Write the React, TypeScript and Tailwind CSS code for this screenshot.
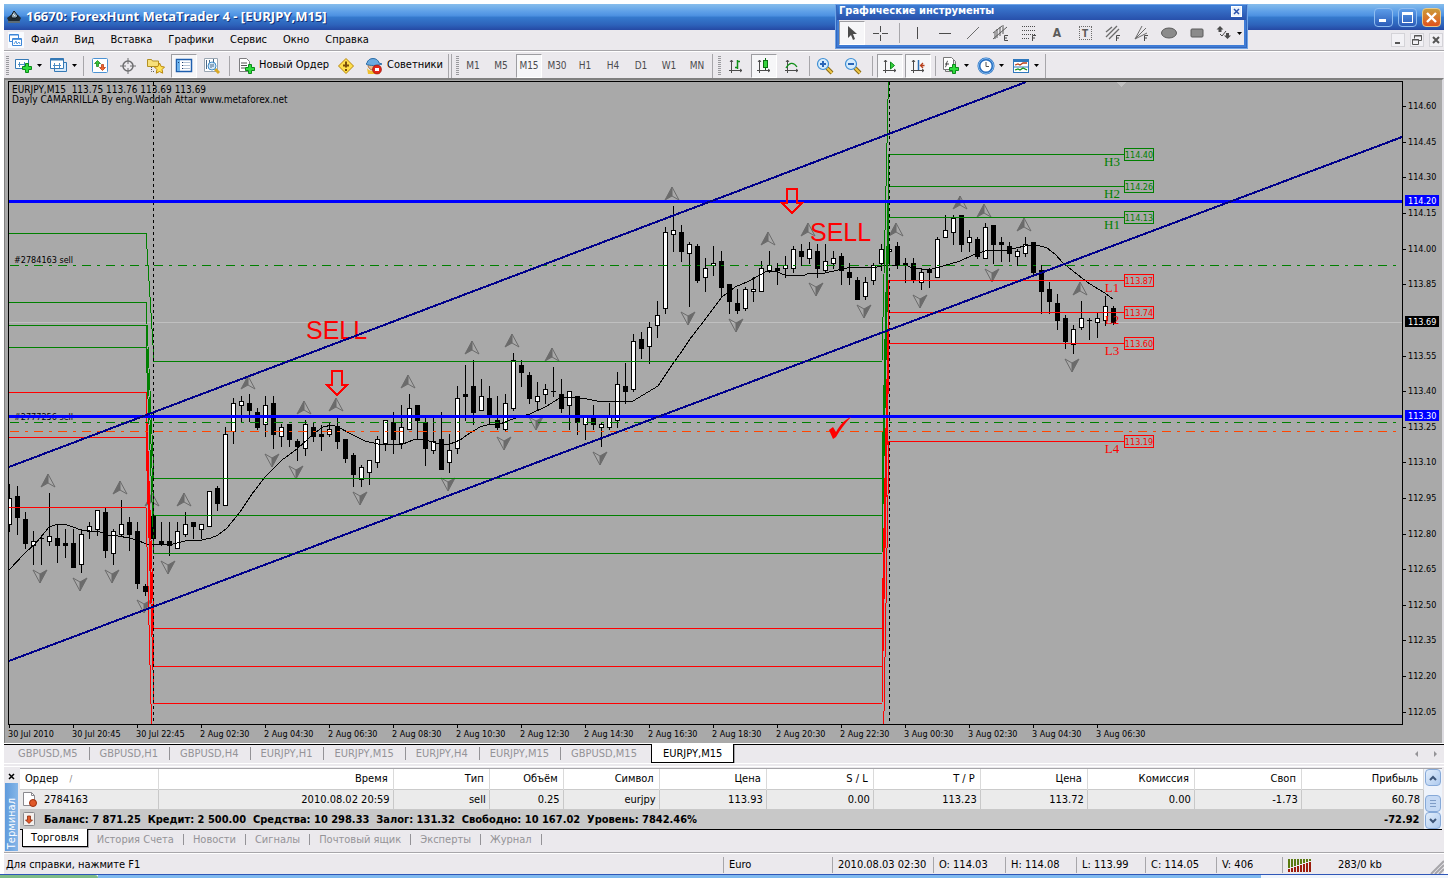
import type { ReactNode } from "react";
import clsx from "clsx";

type Candle = [high: number, low: number, top: number, bottom: number, up: 0 | 1];

const FIRST_X = 9;
const STEP = 8;

const CANDLES: Candle[] = [
  [484, 532, 498, 525, 1], [486, 535, 496, 518, 0], [512, 549, 519, 544, 0], [531, 565, 541, 546, 1],
  [535, 565, 538, 539, 0], [493, 546, 536, 542, 1], [524, 563, 538, 546, 0], [529, 558, 543, 546, 0],
  [529, 568, 543, 568, 0], [529, 573, 534, 565, 1], [522, 539, 526, 532, 1], [510, 536, 510, 530, 1],
  [508, 558, 512, 551, 0], [529, 565, 531, 554, 1], [500, 537, 524, 535, 1], [517, 551, 522, 535, 0],
  [522, 589, 531, 584, 0], [584, 596, 586, 592, 0], [514, 541, 516, 539, 0], [522, 546, 541, 545, 0],
  [522, 556, 541, 546, 0], [522, 549, 531, 549, 1], [512, 537, 524, 535, 1], [522, 539, 522, 527, 0],
  [524, 539, 524, 530, 1], [491, 527, 491, 527, 1], [486, 511, 488, 504, 0], [427, 506, 434, 506, 1],
  [398, 444, 403, 432, 1], [396, 423, 401, 406, 1], [394, 422, 403, 411, 0], [408, 430, 412, 428, 0],
  [396, 437, 405, 425, 1], [396, 449, 403, 435, 0], [424, 447, 427, 437, 1], [424, 447, 424, 440, 0],
  [439, 461, 441, 447, 0], [420, 456, 424, 449, 1], [422, 442, 427, 437, 0], [425, 451, 434, 437, 0],
  [422, 437, 429, 435, 1], [417, 449, 426, 442, 0], [439, 463, 439, 459, 0], [453, 487, 455, 475, 0],
  [465, 487, 467, 480, 1], [460, 485, 460, 473, 1], [436, 468, 439, 463, 1], [420, 451, 420, 444, 1],
  [412, 454, 422, 440, 0], [405, 449, 427, 444, 1], [394, 430, 408, 430, 1], [405, 439, 405, 421, 0],
  [418, 466, 422, 449, 0], [418, 454, 441, 451, 1], [412, 470, 439, 470, 0], [434, 473, 450, 463, 1],
  [386, 454, 398, 449, 1], [365, 421, 394, 397, 0], [360, 425, 386, 413, 0], [379, 411, 396, 411, 1],
  [386, 425, 398, 416, 0], [396, 430, 420, 428, 0], [394, 432, 403, 430, 1], [353, 411, 360, 409, 1],
  [360, 387, 365, 373, 0], [372, 404, 375, 399, 0], [382, 411, 396, 402, 1], [384, 404, 389, 395, 1],
  [367, 397, 391, 392, 0], [379, 413, 394, 409, 0], [391, 430, 391, 406, 1], [396, 435, 396, 423, 0],
  [415, 440, 417, 425, 1], [405, 430, 417, 425, 0], [422, 447, 424, 428, 1], [403, 430, 417, 428, 1],
  [372, 428, 384, 421, 1], [363, 404, 386, 392, 0], [334, 392, 341, 390, 1], [332, 359, 339, 349, 0],
  [322, 364, 327, 347, 1], [301, 338, 315, 326, 1], [227, 314, 232, 309, 1], [206, 252, 230, 235, 1],
  [225, 262, 232, 252, 0], [242, 307, 244, 254, 1], [244, 283, 246, 281, 0], [258, 292, 268, 278, 1],
  [246, 276, 263, 266, 1], [251, 297, 261, 288, 0], [284, 314, 284, 302, 0], [289, 314, 303, 311, 0],
  [287, 311, 289, 309, 1], [277, 302, 289, 292, 1], [261, 292, 268, 292, 1], [251, 273, 265, 271, 1],
  [263, 285, 268, 271, 0], [256, 278, 265, 269, 1], [246, 273, 249, 269, 1], [244, 266, 251, 257, 0],
  [242, 264, 249, 259, 1], [244, 278, 251, 269, 0], [244, 273, 261, 271, 1], [251, 269, 258, 264, 1],
  [253, 285, 256, 271, 0], [263, 285, 272, 278, 0], [277, 300, 280, 300, 0], [277, 300, 282, 297, 1],
  [263, 285, 265, 281, 1], [244, 271, 249, 264, 1], [246, 262, 249, 252, 1], [242, 269, 246, 266, 0],
  [258, 283, 263, 266, 0], [258, 283, 263, 281, 0], [269, 290, 272, 283, 1], [268, 288, 270, 273, 0],
  [237, 278, 239, 278, 1], [215, 238, 230, 238, 1], [215, 245, 218, 233, 1], [215, 252, 215, 245, 0],
  [230, 252, 237, 243, 1], [237, 259, 239, 257, 0], [223, 259, 227, 259, 1], [225, 264, 225, 245, 0],
  [237, 262, 242, 245, 0], [242, 262, 246, 254, 0], [249, 266, 251, 257, 1], [237, 257, 244, 254, 1],
  [242, 275, 242, 273, 0], [265, 314, 270, 292, 0], [282, 314, 289, 302, 0], [294, 330, 303, 321, 0],
  [315, 349, 318, 342, 0], [325, 354, 329, 345, 1], [301, 330, 318, 328, 1], [318, 340, 320, 321, 0],
  [313, 338, 318, 323, 1], [296, 326, 306, 321, 1], [306, 325, 308, 323, 0],
];

const AVERAGE =
  "9,570 25,553 35,544 41,537 49,527 58,524 67,525 73,527 81,530 90,531 100,532 108,535 118,536 129,538 137,540 146,544 173,544 185,541 202,540 211,538 218,535 227,528 240,512 252,494 265,477 282,460 297,449 308,439 315,433 323,427 332,425 338,427 353,435 365,441 378,444 403,444 413,440 420,439 433,442 443,445 450,444 460,440 467,435 480,427 490,424 500,424 513,419 530,414 547,406 558,399 567,397 587,399 602,402 617,401 625,402 633,401 643,395 658,386 672,365 682,351 690,339 707,317 722,297 735,287 747,282 760,275 767,271 777,272 785,275 802,276 810,273 825,273 847,268 877,267 887,265 905,265 913,268 922,269 932,269 950,264 960,261 973,255 985,251 1007,250 1025,246 1037,245 1047,248 1055,254 1063,263 1073,271 1087,282 1098,289 1105,293 1113,299";

const FRACTALS_UP = [
  [48, 474], [120, 481], [152, 493], [184, 493], [248, 376], [304, 401], [336, 398], [408, 375], [472, 341], [512, 334],
  [552, 348], [672, 187], [768, 232], [808, 223], [896, 223], [960, 196], [984, 204], [1024, 218], [1080, 282],
];

const FRACTALS_DOWN = [
  [40, 583], [80, 591], [112, 583], [144, 613], [168, 574], [272, 467], [296, 479], [360, 505], [448, 491], [504, 450],
  [536, 430], [600, 465], [688, 325], [736, 332], [816, 296], [864, 318], [920, 308], [992, 282], [1072, 372],
];

// previous day, current day and next day level of each Camarilla line
const LEVELS = [
  { color: "#008000", y: [233, 361, 56] },
  { color: "#008000", y: [302, 478, 154], name: "H3", price: "114.40" },
  { color: "#008000", y: [325, 515, 186], name: "H2", price: "114.26" },
  { color: "#008000", y: [347, 553, 217], name: "H1", price: "114.13" },
  { color: "#ff0000", y: [392, 628, 280], name: "L1", price: "113.87" },
  { color: "#ff0000", y: [415, 666, 312], name: "L2", price: "113.74" },
  { color: "#ff0000", y: [437, 703, 343], name: "L3", price: "113.60" },
  { color: "#ff0000", y: [507, 820, 441], name: "L4", price: "113.19" },
];

const PRICES: [string, number][] = [
  ["114.60", 106], ["114.45", 142], ["114.30", 177], ["114.15", 213], ["114.00", 249], ["113.85", 284],
  ["113.55", 356], ["113.40", 391], ["113.25", 427], ["113.10", 462], ["112.95", 498], ["112.80", 534],
  ["112.65", 569], ["112.50", 605], ["112.35", 640], ["112.20", 676], ["112.05", 712],
];

const TIMES = [
  "30 Jul 2010", "30 Jul 20:45", "30 Jul 22:45", "2 Aug 02:30", "2 Aug 04:30", "2 Aug 06:30", "2 Aug 08:30",
  "2 Aug 10:30", "2 Aug 12:30", "2 Aug 14:30", "2 Aug 16:30", "2 Aug 18:30", "2 Aug 20:30", "2 Aug 22:30",
  "3 Aug 00:30", "3 Aug 02:30", "3 Aug 04:30", "3 Aug 06:30",
];

const MENU = ["Файл", "Вид", "Вставка", "Графики", "Сервис", "Окно", "Справка"];
const TIMEFRAMES = ["M1", "M5", "M15", "M30", "H1", "H4", "D1", "W1", "MN"];
const CHART_TABS = ["GBPUSD,M5", "GBPUSD,H1", "GBPUSD,H4", "EURJPY,H1", "EURJPY,M15", "EURJPY,H4", "EURJPY,M15", "GBPUSD,M15"];
const TERMINAL_TABS = ["История Счета", "Новости", "Сигналы", "Почтовый ящик", "Эксперты", "Журнал"];

const COLUMNS = [
  { title: "Время", value: "2010.08.02 20:59", width: "w-[235px]" },
  { title: "Тип", value: "sell", width: "w-[96px]" },
  { title: "Объём", value: "0.25", width: "w-[74px]" },
  { title: "Символ", value: "eurjpy", width: "w-[96px]" },
  { title: "Цена", value: "113.93", width: "w-[107px]" },
  { title: "S / L", value: "0.00", width: "w-[107px]" },
  { title: "T / P", value: "113.23", width: "w-[107px]" },
  { title: "Цена", value: "113.72", width: "w-[107px]" },
  { title: "Комиссия", value: "0.00", width: "w-[107px]" },
  { title: "Своп", value: "-1.73", width: "w-[107px]" },
  { title: "Прибыль", value: "60.78", width: "w-[122px]" },
];

function Icon({ children, size = 18 }: { children: ReactNode; size?: number }) {
  return (
    <svg width={size} height={size} viewBox={`0 0 ${size} ${size}`} className="shrink-0" aria-hidden="true">
      {children}
    </svg>
  );
}

function Caret() {
  return (
    <svg width="5" height="3" viewBox="0 0 5 3" className="shrink-0" aria-hidden="true">
      <path d="M0 0h5L2.5 3z" fill="#000" />
    </svg>
  );
}

function Plus({ x, y }: { x: number; y: number }) {
  return (
    <path
      transform={`translate(${x} ${y})`}
      d="M3.5.5h3v3h3v3h-3v3h-3v-3h-3v-3h3z"
      fill="#2fdc3c"
      stroke="#0b8a1a"
    />
  );
}

const Axes = () => (
  <path d="M4.5 3v13M2 13.5h13M3 5l1.5-2L6 5M13 12l2 1.5-2 1.5" fill="none" stroke="#4b4b4b" />
);

function Magnifier({ minus }: { minus?: boolean }) {
  return (
    <Icon>
      <path d="M11 11l5 5" stroke="#8a6a12" strokeWidth="4" />
      <path d="M11 11l5 5" stroke="#f0c94c" strokeWidth="2" />
      <circle cx="7" cy="7" r="5.5" fill="#d6ecfc" stroke="#3f8fd4" strokeWidth="1.2" />
      <path d={minus ? "M4 7h6" : "M4 7h6M7 4v6"} stroke="#2a66b8" strokeWidth="2" />
    </Icon>
  );
}

function ToolButton({
  label,
  pressed,
  caret,
  children,
}: {
  label: string;
  pressed?: boolean;
  caret?: boolean;
  children: ReactNode;
}) {
  return (
    <button
      aria-label={label}
      className={clsx(
        "flex h-6 shrink-0 items-center justify-center border",
        caret ? "w-8 gap-1" : "w-[26px]",
        pressed ? "border-[#9d9da1] border-r-white border-b-white bg-[#f6f6f8]" : "border-transparent",
      )}
    >
      {children}
      {caret && <Caret />}
    </button>
  );
}

const Grip = () => (
  <span className="h-5 w-[3px] shrink-0 bg-[repeating-linear-gradient(to_bottom,#9a9a9e_0_1px,transparent_1px_2px)]" />
);
const Separator = () => <span className="h-5 w-px shrink-0 bg-[#a7a6aa]" />;
const GroupEnd = () => <span className="h-6 w-px shrink-0 bg-[#a7a6aa]" />;

function TitleBar() {
  return (
    <header className="flex h-[26px] shrink-0 items-center bg-[linear-gradient(#86bdec_0%,#5d9fe8_30%,#4e92e2_44%,#3579cd_52%,#2d63bb_80%,#2549a4_100%)] pr-[3px] pl-[2px]">
      <Icon size={16}>
        <path d="M1 9l4-3h7l3 3-2 4H3z" fill="#1f2a33" />
        <path d="M5 7l3-5 4 5-2 2H6z" fill="#8fa3b0" stroke="#10181e" />
        <path d="M2 13h12" stroke="#5d6c76" strokeWidth="2" />
        <path d="M7 5l2 2" stroke="#e6eef3" />
      </Icon>
      <h1 className="ml-1 grow truncate font-['Open_Sans',sans-serif] text-[13px] font-bold text-white [text-shadow:1px_1px_0_#123078]">
        16670: ForexHunt MetaTrader 4 - [EURJPY,M15]
      </h1>
      <div className="flex gap-[5px]">
        <button aria-label="Свернуть" className="flex h-[19px] w-[19px] items-end rounded-sm border border-[#8fbdf0] bg-linear-to-b from-[#5c9ce8] to-[#2c5cb8] p-1">
          <span className="h-[3px] w-[7px] bg-white" />
        </button>
        <button aria-label="Развернуть" className="flex h-[19px] w-[19px] items-center justify-center rounded-sm border border-[#8fbdf0] bg-linear-to-b from-[#5c9ce8] to-[#2c5cb8]">
          <span className="h-[11px] w-[11px] border border-t-[3px] border-white" />
        </button>
        <button aria-label="Закрыть" className="flex h-[19px] w-[19px] items-center justify-center rounded-sm border border-[#e8c98a] bg-linear-to-b from-[#c99a3a] to-[#e0501c]">
          <Icon size={13}>
            <path d="M2 2l9 9M11 2l-9 9" stroke="#fff" strokeWidth="2.4" />
          </Icon>
        </button>
      </div>
    </header>
  );
}

function MenuBar() {
  return (
    <nav className="flex h-5 shrink-0 items-center pl-1 text-[11px]">
      <Icon size={16}>
        <rect width="16" height="16" fill="#f8fbff" />
        <path d="M1.5 2.5h9v7h-9z" fill="#fff" stroke="#3d86d8" />
        <path d="M2 3h8" stroke="#3d86d8" />
        <path d="M4.5 6.5h9v7h-9z" fill="#fff" stroke="#3d86d8" />
        <path d="M5 7.5h8M6 12l2-3 1 3 2-2 1 2" fill="none" stroke="#5a9de0" />
      </Icon>
      <div className="ml-[7px] flex grow gap-4">
        {MENU.map((item) => (
          <button key={item}>{item}</button>
        ))}
      </div>
      <div className="flex gap-[5px] pr-px">
        <button aria-label="Свернуть окно" className="border border-[#d4d3d8] bg-[#f2f1f5]">
          <Icon size={12}>
            <path d="M3 9h5" stroke="#555" strokeWidth="2" />
          </Icon>
        </button>
        <button aria-label="Восстановить окно" className="border border-[#d4d3d8] bg-[#f2f1f5]">
          <Icon size={12}>
            <path d="M3.5 4.5v-3h7v5h-3M3 2h8M1.5 5.5h6v5h-6zM1 6h7" fill="none" stroke="#555" />
          </Icon>
        </button>
        <button aria-label="Закрыть окно" className="border border-[#d4d3d8] bg-[#f2f1f5]">
          <Icon size={12}>
            <path d="M3 3l6 6M9 3l-6 6" stroke="#555" strokeWidth="2" />
          </Icon>
        </button>
      </div>
    </nav>
  );
}

function ToolBar() {
  return (
    <div className="flex h-[27px] shrink-0 items-center overflow-hidden border-t border-white pt-px pl-[2px] text-[11px]">
      <Grip />
      <div className="ml-[3px] flex items-center gap-[3px]">
        <ToolButton label="Новый график" caret>
          <Icon>
            <path d="M.5 2.5h13v9H.5z" fill="#fff" stroke="#3579b5" />
            <path d="M3 7.5h8M4.5 5v5M9.5 5v5" stroke="#4b8cc4" />
            <Plus x={7} y={6} />
          </Icon>
        </ToolButton>
        <ToolButton label="Профили" caret>
          <Icon>
            <path d="M4.5 5.5h12v9h-12z" fill="#d6e9fa" stroke="#3579b5" />
            <path d="M.5 1.5h13v10H.5z" fill="#fff" stroke="#3579b5" />
            <path d="M.5 2.5h13" stroke="#3579b5" strokeWidth="2" />
            <path d="M3 8.5h8M4.5 6v5M9.5 6v5" stroke="#4b8cc4" />
          </Icon>
        </ToolButton>
      </div>
      <div className="mr-[3px] ml-1 flex">
        <Separator />
      </div>
      <div className="flex gap-[2px]">
        <ToolButton label="Обзор рынка">
          <Icon>
            <rect x="1.5" y="1.5" width="15" height="14" rx="1" fill="#fff" stroke="#4b92d4" />
            <path d="M6.5 3.5l3 3h-2v3h-2v-3h-2z" fill="#36c436" stroke="#107a10" strokeWidth=".7" />
            <path d="M11.5 13.5l3-3h-2v-3h-2v3h-2z" fill="#f0662e" stroke="#b03008" strokeWidth=".7" />
          </Icon>
        </ToolButton>
        <ToolButton label="Окно данных">
          <Icon>
            <circle cx="9" cy="9" r="5" fill="none" stroke="#6e6e70" strokeWidth="1.5" />
            <path d="M9 1v6M9 11v6M1 9h6M11 9h6" stroke="#6e6e70" />
          </Icon>
        </ToolButton>
        <ToolButton label="Навигатор">
          <Icon>
            <path d="M.5 9.5v-7h4l1 1.500h6v5.5z" fill="#f7e07a" stroke="#b39022" />
            <path d="M4.5 10v4.5H8" fill="none" stroke="#555" strokeDasharray="1 1" />
            <path d="M12.5 6l1.700 3.500 3.300.5-2.400 2.500.6 3.700-3.200-1.700-3.200 1.700.6-3.700L7.500 10l3.300-.5z" fill="#ffe35a" stroke="#b8860b" />
          </Icon>
        </ToolButton>
        <ToolButton label="Терминал" pressed>
          <Icon>
            <rect x="1.5" y="2.5" width="15" height="12" fill="#fff" stroke="#1f5fae" strokeWidth="1.5" />
            <path d="M2 3h3v11H2z" fill="#6db3ec" />
            <path d="M7 5.5h8M7 8.5h8M7 11.5h8" stroke="#b4c4d6" />
            <path d="M3 5.5h1M7 5.5h1M7 8.5h1M7 11.5h1" stroke="#1f3f6e" />
          </Icon>
        </ToolButton>
        <ToolButton label="Тестер стратегий">
          <Icon>
            <path d="M1.5 1.5h13v13h-13z" fill="#fff" stroke="#9aa6b2" />
            <path d="M3.5 3v9M6.5 3v5M10.5 2v6" stroke="#4a6a8a" />
            <path d="M12 12l4 4" stroke="#d8a826" strokeWidth="3" />
            <circle cx="9" cy="9" r="4" fill="#cfe6f8" fillOpacity=".85" stroke="#3f8cc8" />
            <path d="M8 7v4M10 7v3" stroke="#4a6a8a" />
          </Icon>
        </ToolButton>
      </div>
      <div className="mx-1 flex">
        <Separator />
      </div>
      <button className="ml-[5px] flex items-center gap-1">
        <Icon size={16}>
          <path d="M.5.5h7l3 3v10H.5z" fill="#fff" stroke="#7d7d80" />
          <path d="M2 5h6M2 7.5h6M2 10h4" stroke="#555" />
          <Plus x={6} y={6} />
        </Icon>
        Новый Ордер
      </button>
      <div className="ml-1 flex">
        <ToolButton label="MetaEditor">
          <Icon>
            <path d="M9 1.5L16.5 9 9 16.5 1.5 9z" fill="#ffe04a" stroke="#b8860b" />
            <path d="M9 4.5v6M6 8.5h6" stroke="#7a4e08" strokeWidth="2" />
            <path d="M9 12v2" stroke="#7a4e08" strokeWidth="2" />
          </Icon>
        </ToolButton>
      </div>
      <button className="mr-[5px] ml-[6px] flex items-center gap-1">
        <Icon>
          <circle cx="8" cy="8" r="5" fill="#e8b98a" stroke="#a8744a" />
          <path d="M2 6c1-6 11-6 12 0l3 1c-4 2-13 2-16 0z" fill="#6aaae0" stroke="#2d6ea8" />
          <path d="M2 11c2 4 10 4 12 0l1 6H3z" fill="#f0c030" />
          <circle cx="12" cy="12.5" r="4.5" fill="#e0261a" stroke="#8e0d06" strokeWidth=".6" />
          <rect x="10" y="11" width="4" height="3" fill="#fff" />
        </Icon>
        Советники
      </button>
      <div className="flex gap-[2px]">
        <GroupEnd />
        <GroupEnd />
      </div>
      <div className="ml-1 flex">
        <Grip />
      </div>
      <div className="ml-px flex gap-[2px] text-[10px] text-[#4b4b4e]">
        {TIMEFRAMES.map((tf) => (
          <button
            key={tf}
            aria-pressed={tf === "M15"}
            className={clsx(
              "h-6 w-[26px] border",
              tf === "M15" ? "border-[#9d9da1] border-r-white border-b-white bg-[#f6f6f8]" : "border-transparent",
            )}
          >
            {tf}
          </button>
        ))}
      </div>
      <div className="ml-[2px] flex">
        <GroupEnd />
      </div>
      <div className="mr-[2px] ml-[5px] flex">
        <Grip />
      </div>
      <div className="flex gap-[2px]">
        <ToolButton label="Бары">
          <Icon>
            <Axes />
            <path d="M10.5 3v9M8 10.5h2.500M10.5 4.500H13" stroke="#109018" strokeWidth="1.5" />
          </Icon>
        </ToolButton>
        <ToolButton label="Японские свечи" pressed>
          <Icon>
            <Axes />
            <path d="M10.5 1v12" stroke="#0b6e12" />
            <rect x="8.5" y="3.5" width="4" height="7" fill="#35d23d" stroke="#0b6e12" />
          </Icon>
        </ToolButton>
        <ToolButton label="Линия">
          <Icon>
            <Axes />
            <path d="M3 11c3-5 7-7 11-1" fill="none" stroke="#109018" strokeWidth="1.3" />
          </Icon>
        </ToolButton>
      </div>
      <div className="mr-[2px] ml-1 flex">
        <Separator />
      </div>
      <div className="flex gap-[2px]">
        <ToolButton label="Увеличить">
          <Magnifier />
        </ToolButton>
        <ToolButton label="Уменьшить">
          <Magnifier minus />
        </ToolButton>
      </div>
      <div className="mr-1 ml-[6px] flex">
        <Separator />
      </div>
      <div className="flex gap-[2px]">
        <ToolButton label="Автопрокрутка" pressed>
          <Icon>
            <Axes />
            <path d="M9.5 5v7l4-3.500z" fill="#35d23d" stroke="#0b8a1a" />
          </Icon>
        </ToolButton>
        <ToolButton label="Сдвиг графика" pressed>
          <Icon>
            <Axes />
            <path d="M9.5 3v10" stroke="#2c6fb4" strokeWidth="1.5" />
            <path d="M15.5 8.5h-4M14 6l-2.500 2.500L14 11" fill="none" stroke="#b8401c" strokeWidth="1.3" />
          </Icon>
        </ToolButton>
      </div>
      <div className="mx-1 flex">
        <Separator />
      </div>
      <div className="flex gap-[3px]">
        <ToolButton label="Индикаторы" caret>
          <Icon>
            <path d="M3.5 2.5h8l2 2v10h-10z" fill="#e6e6e8" stroke="#777" />
            <path d="M1.5 .5h8l2 2v10h-10z" fill="#fff" stroke="#777" />
            <path d="M6 4c-2 0-1 6-3 6M3 7h4" fill="none" stroke="#444" />
            <Plus x={7} y={7} />
          </Icon>
        </ToolButton>
        <ToolButton label="Периоды" caret>
          <Icon>
            <circle cx="9" cy="9" r="7" fill="#fff" stroke="#2a6fc0" strokeWidth="3" />
            <circle cx="9" cy="9" r="7.5" fill="none" stroke="#7db8ee" />
            <path d="M9 5v4.500h3" fill="none" stroke="#555" />
          </Icon>
        </ToolButton>
        <ToolButton label="Шаблоны" caret>
          <Icon>
            <rect x="1.5" y="2.5" width="15" height="13" fill="#fff" stroke="#2f78bd" />
            <path d="M1.5 3.5h15" stroke="#2f78bd" strokeWidth="3" />
            <path d="M1.5 10h15" stroke="#2f78bd" />
            <path d="M3 8l3-1 2 1 3-2 4 0" fill="none" stroke="#b8401c" strokeWidth="1.3" />
            <path d="M3 13l3-1 2 1 3-2 4 2" fill="none" stroke="#109018" strokeWidth="1.3" />
          </Icon>
        </ToolButton>
      </div>
      <div className="ml-[3px] flex">
        <GroupEnd />
      </div>
    </div>
  );
}

function DrawingTools() {
  return (
    <section
      aria-label="Графические инструменты"
      className="absolute top-1 left-[835px] border-2 border-t-0 border-[#3567bd] bg-[#ebe9ed] outline-1 -outline-offset-1 outline-[#6ea3e6]"
    >
      <div className="flex h-4 items-center justify-between bg-linear-to-b from-[#3f80d6] to-[#2850ab] pr-1 pb-[2px] pl-[2px]">
        <h2 className="text-[11px] leading-[14px] font-bold text-white">Графические инструменты</h2>
        <button aria-label="Закрыть панель" className="flex h-[11px] w-[11px] items-center justify-center border border-white bg-[#e9f1fb]">
          <Icon size={7}>
            <path d="M1 1l5 5M6 1L1 6" stroke="#2850ab" strokeWidth="1.5" />
          </Icon>
        </button>
      </div>
      <div className="flex items-center gap-[2px] border-2 border-t-0 border-[#3e7cd6] pt-px">
        <ToolButton label="Курсор" pressed>
          <Icon>
            <path d="M5 2v12l3-3 2 5 2-1-2-5h4z" fill="#4b4b4b" />
          </Icon>
        </ToolButton>
        <ToolButton label="Перекрестие">
          <Icon>
            <path d="M9.5 2v6M9.5 11v6M2 9.5h6M11 9.5h6" stroke="#4b4b4b" />
          </Icon>
        </ToolButton>
        <div className="mr-[2px] ml-[4px] flex">
          <Separator />
        </div>
        <ToolButton label="Вертикальная линия">
          <Icon>
            <path d="M9.5 3v12" stroke="#4b4b4b" />
          </Icon>
        </ToolButton>
        <ToolButton label="Горизонтальная линия">
          <Icon>
            <path d="M3 9.5h12" stroke="#4b4b4b" />
          </Icon>
        </ToolButton>
        <ToolButton label="Трендовая линия">
          <Icon>
            <path d="M3 15L15 3" stroke="#6b6b6b" />
          </Icon>
        </ToolButton>
        <ToolButton label="Равноудаленный канал">
          <Icon>
            <path d="M1 9l9-7M1 15L15 3M5 5v9M8 3v9M11 1v9M3 8v7" stroke="#5b5b5b" />
            <path d="M16 11.5h-3.500v5H16M12.5 14H15" fill="none" stroke="#4b4b4b" />
          </Icon>
        </ToolButton>
        <ToolButton label="Линии Фибоначчи">
          <Icon>
            <path d="M2 2.5h14M2 6.5h14M2 10.5h14M2 14.5h8" stroke="#4b4b4b" strokeDasharray="1 1" />
            <path d="M16 11.5h-3.500V17M12.5 14H15" fill="none" stroke="#4b4b4b" />
          </Icon>
        </ToolButton>
        <ToolButton label="Текст">
          <span aria-hidden="true" className="text-[12px] font-bold text-[#5b5b5b]">A</span>
        </ToolButton>
        <ToolButton label="Текстовая метка">
          <span aria-hidden="true" className="flex h-[14px] w-[13px] items-center justify-center border border-dotted border-[#6b6b6b] text-[10px] font-bold text-[#5b5b5b]">
            T
          </span>
        </ToolButton>
        <ToolButton label="Канал Фибоначчи">
          <Icon>
            <path d="M2 8l6-5M2 13L13 2M5 15L15 5" stroke="#6b6b6b" strokeWidth="1.3" />
            <path d="M16 11.5h-3.500V17M12.5 14H15" fill="none" stroke="#4b4b4b" />
          </Icon>
        </ToolButton>
        <ToolButton label="Веер Фибоначчи">
          <Icon>
            <path d="M3 15L10 2M3 15L14 4M3 15l12-6" stroke="#6b6b6b" />
            <path d="M16 11.5h-3.500V17M12.5 14H15" fill="none" stroke="#4b4b4b" />
          </Icon>
        </ToolButton>
        <ToolButton label="Эллипс">
          <Icon>
            <ellipse cx="9" cy="9" rx="7.5" ry="5" fill="#8b8b8b" stroke="#5b5b5b" />
          </Icon>
        </ToolButton>
        <ToolButton label="Прямоугольник">
          <Icon>
            <rect x="3" y="5" width="12" height="8" rx="1" fill="#8b8b8b" stroke="#5b5b5b" />
          </Icon>
        </ToolButton>
        <ToolButton label="Стрелки" caret>
          <Icon>
            <path d="M5 2l3.500 3.500h-2V8h-3V5.500h-2z" fill="#4b4b4b" />
            <path d="M12.5 15L16 11.500h-2V9h-3v2.500H9z" fill="#4b4b4b" />
            <path d="M5 10l2 2 4-5" fill="none" stroke="#4b4b4b" />
          </Icon>
        </ToolButton>
      </div>
    </section>
  );
}

function Levels() {
  return (
    <>
      {LEVELS.map(({ color, y: [before, today, next], name, price }) => (
        <g key={before} fill={color} stroke="none">
          <rect x="9" y={before} width="137" height="1" />
          <path d={`M146 ${before}L154 ${today}`} stroke={color} />
          <rect x="153" y={today} width="729" height="1" />
          <path d={`M882 ${today}L889 ${next}`} stroke={color} />
          <rect x="889" y={next} width="235" height="1" />
          {name && (
            <>
              <rect x="1124" y={next - 6} width="30" height="13" />
              <rect x="1125" y={next - 5} width="28" height="11" fill="#a9a9a9" />
              <text x="1139" y={next + 4} textAnchor="middle" fontSize="9">
                {price}
              </text>
            </>
          )}
        </g>
      ))}
    </>
  );
}

function SellArrow({ x, y, height }: { x: number; y: number; height: number }) {
  return (
    <path
      transform={`translate(${x} ${y})`}
      d={`M-5 0H5V${height}H10L0 ${height + 10}L-10 ${height}H-5Z`}
      fill="none"
      stroke="#ff0000"
      strokeWidth="2"
    />
  );
}

function Plot() {
  return (
    <svg className="block h-full w-full" role="img" aria-label="EURJPY, M15">
      <g transform="translate(-9 -82)" shapeRendering="crispEdges">
        <rect x="9" y="322" width="4000" height="1" fill="#c0c0c0" />
        <path d="M1117 82h9l-4 5h-1z" fill="#c0c0c0" />
        <g fill="#6b6b6b" stroke="#6b6b6b" strokeWidth="1" shapeRendering="auto">
          {FRACTALS_UP.map(([x, y]) => (
            <g key={x} transform={`translate(${x} ${y})`}>
              <path d="M0 0L-7 13L0 9z" />
              <path d="M0 0L7 13L0 9" fill="none" />
            </g>
          ))}
          {FRACTALS_DOWN.map(([x, y]) => (
            <g key={x} transform={`translate(${x} ${y}) rotate(180)`}>
              <path d="M0 0L-7 13L0 9z" />
              <path d="M0 0L7 13L0 9" fill="none" />
            </g>
          ))}
        </g>

        {CANDLES.map(([high, low, top, bottom, up], i) => {
          const x = FIRST_X + i * STEP;
          return (
            <g key={x}>
              <rect x={x} y={high} width="1" height={low - high} />
              <rect x={x - 2} y={top} width="5" height={bottom - top} />
              {up === 1 && <rect x={x - 1} y={top + 1} width="3" height={bottom - top - 2} fill="#fff" />}
            </g>
          );
        })}

        <polyline points={AVERAGE} fill="none" stroke="#000" />
        <Levels />
        <path d="M153 82V4000M889 82V4000" stroke="#000" strokeDasharray="3 3" />

        <g fill="none" strokeDasharray="9 6 3 6">
          <path d="M10 265H4000" stroke="#008000" />
          <path d="M10 422H4000" stroke="#008000" />
          <path d="M10 431H4000" stroke="#ff4500" />
        </g>

        <g fontSize="10">
          <text x="12" y="93" className="whitespace-pre">EURJPY,M15  113.75 113.76 113.69 113.69</text>
          <text x="12" y="103">Dayly CAMARRILLA By eng.Waddah Attar www.metaforex.net</text>
        </g>
        <g fontSize="9">
          <text x="14" y="263">#2784163 sell</text>
          <text x="14" y="420">#2777256 sell</text>
        </g>

        <rect x="9" y="200" width="4000" height="3" fill="#0000ff" />
        <rect x="9" y="415" width="4000" height="3" fill="#0000ff" />

        <g fill="#ff0000" fontSize="25" fontFamily="Liberation Sans, sans-serif">
          <text x="306" y="339">SELL</text>
          <text x="810" y="241">SELL</text>
        </g>
        <SellArrow x={337} y={371} height={14} />
        <SellArrow x={792} y={189} height={14} />
        <path d="M829 430l4-3 3 5c4-7 8-12 15-15-6 6-11 13-15 20l-3 2z" fill="#ff0000" shapeRendering="auto" />

        <g stroke="#00008b" strokeWidth="2">
          <path d="M9 467L1026 82" />
          <path d="M9 661L1402 137L2402 -239" fill="none" />
        </g>

        <g fontSize="13" fontFamily="Liberation Serif, serif" textAnchor="middle">
          {LEVELS.filter((level) => level.name).map(({ color, y, name }) => (
            <text key={name} x="1112" y={y[2] + 12} fill={color}>
              {name}
            </text>
          ))}
        </g>
      </g>
    </svg>
  );
}

function PriceTag({ y, price, color }: { y: number; price: string; color: string }) {
  return (
    <>
      <rect x="1405" y={y} width="34" height="11" fill={color} />
      <text x="1408" y={y + 9} fill="#fff">
        {price}
      </text>
    </>
  );
}

function Chart() {
  return (
    <main className="grid min-h-0 grow grid-cols-[minmax(0,1fr)_39px] grid-rows-[minmax(0,1fr)_18px] border-t-2 border-r-2 border-l border-t-[#808080] border-r-[#dcdbe0] border-l-[#808080] bg-[#a9a9a9] pt-px pl-[3px]">
      <div className="min-h-0 overflow-hidden border border-black">
        <Plot />
      </div>
      <svg className="block h-full w-full" role="img" aria-label="Цена" fontSize="9">
        <g transform="translate(-1403 -81)">
          {PRICES.map(([price, y]) => (
            <g key={price}>
              <rect x="1403" y={y} width="3" height="1" />
              <text x="1408" y={y + 3}>
                {price}
              </text>
            </g>
          ))}
          <PriceTag y={195} price="114.20" color="#0000ff" />
          <PriceTag y={316} price="113.69" color="#000" />
          <PriceTag y={410} price="113.30" color="#0000ff" />
        </g>
      </svg>
      <svg className="col-span-2 block h-full w-full" role="img" aria-label="Время" fontSize="9">
        {TIMES.map((time, i) => (
          <g key={time}>
            <rect x={1 + i * 64} y="0" width="1" height="3" />
            <text x={i * 64} y="12">
              {time}
            </text>
          </g>
        ))}
      </svg>
    </main>
  );
}

function ChartTabs() {
  return (
    <div role="tablist" aria-label="Графики" className="flex h-[19px] shrink-0 border-t border-black pl-[3px] text-[11px] text-[#949397]">
      <div className="flex h-[17px] items-center">
        {CHART_TABS.map((tab, i) => (
          <button
            key={i}
            role="tab"
            className={clsx(
              "h-[13px] pr-[11px] pl-[10px] leading-[13px] first:pl-[11px]",
              i < CHART_TABS.length - 1 && "border-r border-[#949397]",
            )}
          >
            {tab}
          </button>
        ))}
      </div>
      <button role="tab" aria-selected="true" className="-mt-px ml-[3px] h-[19px] border border-t-0 border-black bg-white px-[11px] leading-[17px] text-black shadow-[1px_1px_0_#a7a6aa]">
        EURJPY,M15
      </button>
      <div className="ml-auto flex items-center gap-3 pr-[6px]">
        <button aria-label="Прокрутить влево">
          <Icon size={6}>
            <path d="M4 0v6L1 3z" fill="#949397" />
          </Icon>
        </button>
        <button aria-label="Прокрутить вправо">
          <Icon size={6}>
            <path d="M2 0v6l3-3z" fill="#949397" />
          </Icon>
        </button>
      </div>
    </div>
  );
}

function OrdersTable() {
  return (
    <table className="w-full table-fixed border-collapse text-[11px] leading-[15px]">
      <thead>
        <tr className="h-5 border-b border-[#cbcbcb] bg-white">
          <th className="w-[138px] border-r border-[#dadada] p-0 pl-[5px] text-left font-normal">
            Ордер <span className="ml-2 text-[9px] text-[#808080]">/</span>
          </th>
          {COLUMNS.map(({ title, width }, i) => (
            <th key={i} className={clsx("border-r border-[#dadada] p-0 pr-[5px] text-right font-normal", width)}>
              {title}
            </th>
          ))}
        </tr>
      </thead>
      <tbody>
        <tr className="h-5 bg-[#ebebeb]">
          <td className="border-r border-[#c8c8c8] p-0">
            <div className="flex items-center gap-[6px] pl-[2px]">
              <Icon size={16}>
                <path d="M1.5 1.5h8l3 3v10h-11z" fill="#fff" stroke="#8a8a8e" />
                <path d="M9.5 1.5v3h3" fill="none" stroke="#8a8a8e" />
                <circle cx="11" cy="12" r="3.5" fill="#e0592a" stroke="#9c2f0c" />
              </Icon>
              2784163
            </div>
          </td>
          {COLUMNS.map(({ value }, i) => (
            <td key={i} className="border-r border-[#c8c8c8] p-0 pr-[3px] text-right">
              {value}
            </td>
          ))}
        </tr>
        <tr className="h-5 bg-[#c8c8c8] font-bold">
          <td colSpan={11} className="p-0">
            <div className="flex items-center gap-[8px] pl-[2px] whitespace-pre">
              <Icon size={14}>
                <rect x="1.5" y=".5" width="11" height="13" rx="1" fill="#f3efec" stroke="#8a8a8e" />
                <path d="M7 11.5L3.500 8h2V4h3v4h2z" fill="#e0592a" stroke="#8c2a0a" strokeWidth=".8" />
              </Icon>
              Баланс: 7 871.25  Кредит: 2 500.00  Средства: 10 298.33  Залог: 131.32  Свободно: 10 167.02  Уровень: 7842.46%
            </div>
          </td>
          <td className="p-0 pr-[4px] text-right">-72.92</td>
        </tr>
      </tbody>
    </table>
  );
}

function ScrollButton({ label, path }: { label: string; path: string }) {
  return (
    <button aria-label={label} className="flex h-[17px] w-4 items-center justify-center rounded-sm border border-[#86a9d8] bg-linear-to-br from-[#e3eefb] to-[#aecaee]">
      <Icon size={10}>
        <path d={path} fill="none" stroke="#3d5578" strokeWidth="2" />
      </Icon>
    </button>
  );
}

function Terminal() {
  return (
    <section aria-label="Терминал" className="flex h-[86px] shrink-0 border-t border-white pt-px">
      <div className="flex w-4 shrink-0 flex-col items-center pr-px pb-px">
        <button aria-label="Закрыть терминал" className="flex h-[15px] items-center pt-[2px]">
          <Icon size={7}>
            <path d="M1 1l5 5M6 1L1 6" stroke="#000" strokeWidth="1.5" />
          </Icon>
        </button>
        <div className="flex w-[13px] grow items-end justify-center bg-linear-to-r from-[#5f9bdc] to-[#86b6e8]">
          <h2 className="rotate-180 pt-[2px] text-[11px] leading-[13px] text-white [writing-mode:vertical-rl]">Терминал</h2>
        </div>
      </div>
      <div className="min-w-0 grow pr-[2px]">
        <div className="flex h-[62px] overflow-hidden border-t border-b border-t-[#a7a6aa] border-b-black">
          <div className="min-w-0 grow">
            <OrdersTable />
          </div>
          <div className="flex w-[18px] shrink-0 flex-col items-center bg-[#eef3fb]">
            <ScrollButton label="Вверх" path="M2 7l3-3 3 3" />
            <span className="mt-[9px] flex h-[17px] w-4 items-center justify-center rounded-sm border border-[#86a9d8] bg-[#c5d9f4]">
              <Icon size={8}>
                <path d="M1 .5h6M1 3.5h6M1 6.5h6" stroke="#7f9cc6" />
              </Icon>
            </span>
            <ScrollButton label="Вниз" path="M2 3l3 3 3-3" />
          </div>
        </div>
        <div role="tablist" aria-label="Терминал" className="flex text-[11px] text-[#949397]">
          <button role="tab" aria-selected="true" className="-mt-px ml-[2px] h-[18px] border border-t-0 border-black bg-white px-2 leading-[17px] text-black shadow-[1px_1px_0_#a7a6aa]">
            Торговля
          </button>
          <div className="flex h-[19px] items-center">
            {TERMINAL_TABS.map((tab) => (
              <button key={tab} role="tab" className="h-[11px] border-r border-[#949397] px-[9px] leading-[11px]">
                {tab}
              </button>
            ))}
          </div>
        </div>
      </div>
    </section>
  );
}

function StatusCell({ width, children }: { width: string; children: ReactNode }) {
  return <span className={clsx("flex h-4 shrink-0 items-center border-l border-[#a7a6aa] pl-[5px]", width)}>{children}</span>;
}

function StatusBar() {
  return (
    <footer className="flex h-[22px] shrink-0 items-center border-t border-[#a7a6aa] pt-[3px] pl-[2px] text-[11px] shadow-[inset_0_1px_0_#fff]">
      <p className="grow">Для справки, нажмите F1</p>
      <StatusCell width="w-[109px]">Euro</StatusCell>
      <StatusCell width="w-[101px]">2010.08.03 02:30</StatusCell>
      <StatusCell width="w-[72px]">O: 114.03</StatusCell>
      <StatusCell width="w-[71px]">H: 114.08</StatusCell>
      <StatusCell width="w-[69px]">L: 113.99</StatusCell>
      <StatusCell width="w-[71px]">C: 114.05</StatusCell>
      <StatusCell width="w-[66px]">V: 406</StatusCell>
      <StatusCell width="w-[148px]">
        <svg width="24" height="13" viewBox="0 0 24 13" shapeRendering="crispEdges" aria-label="Соединение" role="img">
          {[0, 1, 2, 3, 4, 5, 6, 7].map((i) => (
            <g key={i}>
              <rect x={i * 3} y="0" width="2" height={9 - i} fill="#5a7a10" />
              <rect x={i * 3} y={10 - i} width="2" height={3 + i} fill="#9c1c0c" />
            </g>
          ))}
        </svg>
        <span className="ml-[26px]">283/0 kb</span>
      </StatusCell>
      <div className="self-end">
        <Icon size={14}>
          <path d="M1 14L14 1M5 14L14 5M9 14L14 9" stroke="#a7a6aa" strokeWidth="2" />
        </Icon>
      </div>
    </footer>
  );
}

export default function App() {
  return (
    <div className="flex h-screen min-h-[600px] flex-col overflow-hidden bg-white px-1 pt-1 font-['DejaVu_Sans_Condensed','DejaVu_Sans',sans-serif] text-black">
      <div className="flex min-h-0 grow flex-col bg-[#ebe9ed]">
        <TitleBar />
        <MenuBar />
        <div className="h-px shrink-0 bg-[#a7a6aa]" />
        <ToolBar />
        <Chart />
        <div className="h-px shrink-0 bg-white" />
        <ChartTabs />
        <div className="h-[3px] shrink-0 border-t border-white" />
        <Terminal />
        <StatusBar />
      </div>
      <div className="-mx-1 flex h-1 shrink-0 border-t border-[#2f57b8]">
        <span className="w-[98px] rounded-tr bg-[#7dbb86]" />
        <span className="grow bg-[#7fb9ee]" />
        <span className="w-[187px] bg-[#eef4fc]" />
      </div>
      <DrawingTools />
    </div>
  );
}
